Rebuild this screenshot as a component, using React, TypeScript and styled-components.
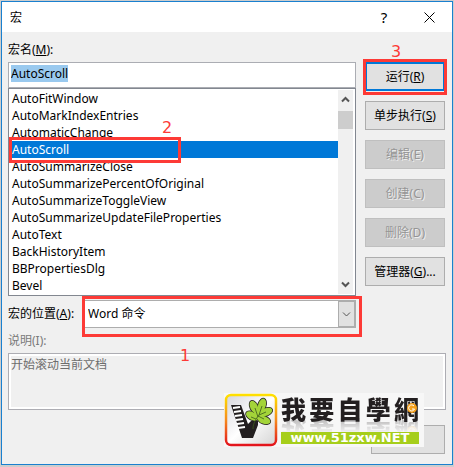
import React, { useEffect, useRef, useState } from 'react';
import styled, { createGlobalStyle, css } from 'styled-components';

const uiFont = '"Noto Sans", "Noto Sans CJK SC", sans-serif';

const GlobalStyle = createGlobalStyle`
  * { box-sizing: border-box; }
  body {
    margin: 0;
    background: #cdcdcd;
    font: 12px/17px ${uiFont};
    color: #000;
  }
  button, input, select, textarea { font: inherit; color: inherit; }
`;

const Page = styled.div`
  padding: 1px;
`;

const Dialog = styled.section`
  position: relative;
  border: 1px solid #1a80cf;
  background: #f0f0f0;
`;

const TitleBar = styled.header`
  display: flex;
  align-items: center;
  height: 30px;
  padding: 0 8px;
  background: #fff;
`;

const Title = styled.h1`
  flex: 1;
  margin: 0;
  font-size: 12px;
  font-weight: 400;
`;

const TitleButton = styled.button`
  display: grid;
  place-items: center;
  width: 60px;
  height: 28px;
  margin: 0;
  padding: 0;
  border: 0;
  background: transparent;
  font-size: 15px;
  &:last-child { width: 30px; }
`;

const Content = styled.form`
  display: flex;
  flex-direction: column;
  padding: 9px 6px 10px;
`;

const Label = styled.label<{ $muted?: boolean }>`
  display: block;
  line-height: 18px;
  white-space: nowrap;
  color: ${(p) => (p.$muted ? '#7a7a7a' : '#000')};
`;

const Main = styled.div`
  display: flex;
  gap: 9px;
  margin-top: 3px;
`;

const Picker = styled.div`
  flex: 1;
  min-width: 0;
`;

const NameInput = styled.input`
  display: block;
  width: 100%;
  height: 26px;
  padding: 0 2px 3px;
  border: 1px solid #abadb3;
  background: #fff;
  outline: none;
  &::selection { background: #99c9ef; color: #000; }
`;

const ListFrame = styled.div`
  position: relative;
  display: flex;
  padding: 1px 2px 1px 1px;
  border: 1px solid #828790;
  background: #fff;
`;

const List = styled.ul`
  flex: 1;
  margin: 0;
  padding: 0;
  list-style: none;
`;

const Item = styled.li<{ $selected: boolean }>`
  height: 17px;
  padding-left: 2px;
  cursor: default;
  ${(p) => p.$selected && css`background: #0078d7; color: #fff;`}
`;

const ScrollTrack = styled.div`
  display: flex;
  flex-direction: column;
  width: 15px;
  background: #f0f0f0;
`;

const ScrollButton = styled.button`
  display: grid;
  place-items: center;
  height: 19px;
  padding: 0;
  border: 0;
  background: transparent;
  &:last-child { margin-top: auto; }
`;

const ScrollThumb = styled.div`
  height: 18px;
  margin-top: 2px;
  background: #cdcdcd;
`;

const Actions = styled.div`
  display: flex;
  flex-direction: column;
  gap: 10px;
  width: 80px;
  margin-right: 1px;
`;

const Highlighted = styled.div`
  position: relative;
  display: grid;
`;

const PushButton = styled.button<{ $default?: boolean }>`
  height: 29px;
  padding: 0;
  border: ${(p) => (p.$default ? '2px solid #0078d7' : '1px solid #adadad')};
  background: #e1e1e1;
  white-space: nowrap;
  &:disabled {
    border-color: #bfbfbf;
    background: #ccc;
    color: #959595;
    text-shadow: 1px 1px 0 #eee;
  }
  &:disabled u { text-decoration: none; }
`;

const LocationRow = styled.div`
  display: flex;
  align-items: center;
  gap: 10px;
  margin: 4px 90px 0 0;
`;

const SelectBox = styled.div`
  position: relative;
  display: flex;
  flex: 1;
  height: 28px;
  border: 1px solid #adadad;
  background: #fff;
`;

const LocationSelect = styled.select`
  flex: 1;
  padding: 0 22px 2px 3px;
  border: 0;
  appearance: none;
  background: transparent;
  outline: none;
`;

const SelectArrow = styled.span`
  position: absolute;
  inset: 0 0 0 auto;
  display: grid;
  place-items: center;
  width: 17px;
  border: 1px solid #adadad;
  background: #e1e1e1;
  pointer-events: none;
`;

const DescriptionLabel = styled(Label)`
  margin-top: 4px;
`;

const Description = styled.textarea`
  height: 57px;
  margin-top: 3px;
  padding: 2px;
  border: 1px solid #adadb3;
  background: #f0f0f0;
  box-shadow: inset 0 0 0 2px #fff;
  color: #6d6d6d;
  resize: none;
  outline: none;
`;

const Footer = styled.footer`
  display: flex;
  justify-content: flex-end;
  margin: 15px 1px 0 0;
`;

const CancelButton = styled(PushButton)`
  width: 74px;
`;

const marks = {
  location: css`inset: -5px -7px -10px -3px;`,
  item: css`top: 48px; left: 0; width: 172px; height: 26px;`,
  run: css`inset: -3px -2px -4px;`,
};

const RedFrame = styled.span<{ $mark: keyof typeof marks }>`
  position: absolute;
  ${(p) => marks[p.$mark]}
  border: 3px solid #fd3a36;
  pointer-events: none;
`;

const steps = {
  location: css`top: 45px; left: 95px;`,
  item: css`top: 29px; left: 153px;`,
  run: css`top: -20px; left: 26px;`,
};

const Step = styled.span<{ $mark: keyof typeof steps }>`
  position: absolute;
  ${(p) => steps[p.$mark]}
  color: #fd3a36;
  font: 16px/20px "DejaVu Sans", sans-serif;
`;

const Brand = styled.a`
  position: absolute;
  right: 28px;
  bottom: 17px;
  display: flex;
  gap: 3px;
  width: 200px;
  height: 54px;
  background: #f7f7f7;
  color: #231f20;
  text-decoration: none;
`;

const BrandText = styled.span`
  display: flex;
  flex: 1;
  flex-direction: column;
  justify-content: space-between;
  padding: 2px 5px 3px 0;
`;

const BrandName = styled.span`
  position: relative;
  display: flex;
  justify-content: space-between;
  height: 26px;
  font: 900 25px/26px "Noto Sans CJK TC", sans-serif;
  -webkit-box-reflect: below -3px linear-gradient(transparent 40%, rgba(0, 0, 0, 0.3));
`;

const BrandSeal = styled.svg`
  position: absolute;
  right: 2px;
  top: 8px;
`;

const BrandUrl = styled.span`
  position: relative;
  display: flex;
  justify-content: center;
  background: #a6ce1b;
  color: #fff;
  font: 700 13px/12px "DejaVu Sans", sans-serif;
`;

const macros = [
  'AutoFitWindow', 'AutoMarkIndexEntries', 'AutomaticChange', 'AutoScroll',
  'AutoSummarizeClose', 'AutoSummarizePercentOfOriginal', 'AutoSummarizeToggleView',
  'AutoSummarizeUpdateFileProperties', 'AutoText', 'BackHistoryItem', 'BBPropertiesDlg', 'Bevel',
];

const Chevron = ({ up = false, thin = false }: { up?: boolean; thin?: boolean }) => (
  <svg width="9" height="7" viewBox="0 0 9 7" fill="none" stroke="#555" strokeWidth={thin ? 1 : 2}>
    <path d={up ? 'M1 5.5 4.5 2 8 5.5' : 'M1 1.5 4.5 5 8 1.5'} />
  </svg>
);

const lobes = [
  { x: 28, y: 23, r: -60 },
  { x: 30, y: 14, r: -25 },
  { x: 38, y: 12, r: 18 },
  { x: 42, y: 19, r: 68 },
  { x: 40, y: 27, r: 110 },
];

const BrandMark = () => (
  <svg width="54" height="54" viewBox="0 0 54 54" aria-hidden="true">
    <defs>
      <linearGradient id="rim" x2="0" y2="1">
        <stop stopColor="#ffe000" />
        <stop offset="0.5" stopColor="#f58a1c" />
        <stop offset="1" stopColor="#e3141c" />
      </linearGradient>
      <linearGradient id="panel" x2="1" y2="1">
        <stop stopColor="#d5d5dc" />
        <stop offset="0.5" stopColor="#fff" />
        <stop offset="1" stopColor="#d5d5d5" />
      </linearGradient>
    </defs>
    <rect x="2" y="2" width="50" height="50" rx="5" fill="url(#panel)" stroke="url(#rim)" strokeWidth="2.5" />
    <path d="M7 12h10l7 19 3-3h7v4l-5 13H18Z" fill="#231f20" />
    <path d="m9 15 7-1m-6 5 7-1m-6 5 7-1m-6 5 7-1m-6 5 7-1m-6 5 7-1" stroke="#fff" strokeWidth="2" />
    <g fill="#231f20">
      {lobes.map((l) => (
        <ellipse key={l.r} rx="4.6" ry="7.4" transform={`translate(${l.x} ${l.y}) rotate(${l.r})`} />
      ))}
    </g>
    <g fill="#a3d439">
      {lobes.map((l) => (
        <ellipse key={l.r} rx="3.8" ry="6.6" transform={`translate(${l.x} ${l.y}) rotate(${l.r})`} />
      ))}
      <circle cx="35" cy="20" r="5" />
    </g>
    <path d="M29 36c0-6 3-10 6-14m-3 4-5-2m7 0-3-9m4 7 3-9m-3 9 7-3m-8 4 6 3" fill="none" stroke="#3d5a1c" strokeWidth="0.8" />
  </svg>
);

export default function App() {
  const [name, setName] = useState('AutoScroll');
  const nameRef = useRef<HTMLInputElement>(null);

  useEffect(() => {
    nameRef.current?.focus();
    nameRef.current?.select();
  }, []);

  return (
    <Page>
      <GlobalStyle />
      <Dialog role="dialog" aria-labelledby="title">
        <TitleBar>
          <Title id="title">宏</Title>
          <TitleButton type="button" aria-label="帮助">?</TitleButton>
          <TitleButton type="button" aria-label="关闭">
            <svg width="11" height="11" viewBox="0 0 11 11" stroke="#000"><path d="m.5.5 10 10m0-10-10 10" /></svg>
          </TitleButton>
        </TitleBar>
        <Content onSubmit={(e) => e.preventDefault()}>
          <Label htmlFor="macro">宏名(<u>M</u>):</Label>
          <Main>
            <Picker>
              <NameInput id="macro" ref={nameRef} value={name} spellCheck={false} onChange={(e) => setName(e.target.value)} />
              <ListFrame>
                <List role="listbox" aria-label="宏名">
                  {macros.map((m) => (
                    <Item key={m} role="option" aria-selected={m === name} $selected={m === name} onClick={() => setName(m)}>{m}</Item>
                  ))}
                </List>
                <ScrollTrack>
                  <ScrollButton type="button" aria-label="向上滚动"><Chevron up /></ScrollButton>
                  <ScrollThumb />
                  <ScrollButton type="button" aria-label="向下滚动"><Chevron /></ScrollButton>
                </ScrollTrack>
                <RedFrame $mark="item" />
                <Step $mark="item">2</Step>
              </ListFrame>
            </Picker>
            <Actions>
              <Highlighted>
                <PushButton type="submit" $default>运行(<u>R</u>)</PushButton>
                <RedFrame $mark="run" />
                <Step $mark="run">3</Step>
              </Highlighted>
              <PushButton type="button">单步执行(<u>S</u>)</PushButton>
              <PushButton type="button" disabled>编辑(<u>E</u>)</PushButton>
              <PushButton type="button" disabled>创建(<u>C</u>)</PushButton>
              <PushButton type="button" disabled>删除(<u>D</u>)</PushButton>
              <PushButton type="button">管理器(<u>G</u>)...</PushButton>
            </Actions>
          </Main>
          <LocationRow>
            <Label htmlFor="location">宏的位置(<u>A</u>):</Label>
            <SelectBox>
              <LocationSelect id="location"><option>Word 命令</option></LocationSelect>
              <SelectArrow><Chevron thin /></SelectArrow>
              <RedFrame $mark="location" />
              <Step $mark="location">1</Step>
            </SelectBox>
          </LocationRow>
          <DescriptionLabel htmlFor="description" $muted>说明(I):</DescriptionLabel>
          <Description id="description" readOnly value="开始滚动当前文档" />
          <Footer><CancelButton type="button" aria-label="取消" /></Footer>
        </Content>
        <Brand href="#">
          <BrandMark />
          <BrandText>
            <BrandName>
              {[...'我要自學網'].map((c) => <span key={c}>{c}</span>)}
              <BrandSeal width="10" height="10" viewBox="0 0 10 10" fill="none" stroke="#fff">
                <circle cx="5" cy="5" r="5" fill="#f7a11b" stroke="none" />
                <path d="M7 3a3 3 0 1 0 .5 3H5" />
              </BrandSeal>
            </BrandName>
            <BrandUrl>www.51zxw.NET</BrandUrl>
          </BrandText>
        </Brand>
      </Dialog>
    </Page>
  );
}
